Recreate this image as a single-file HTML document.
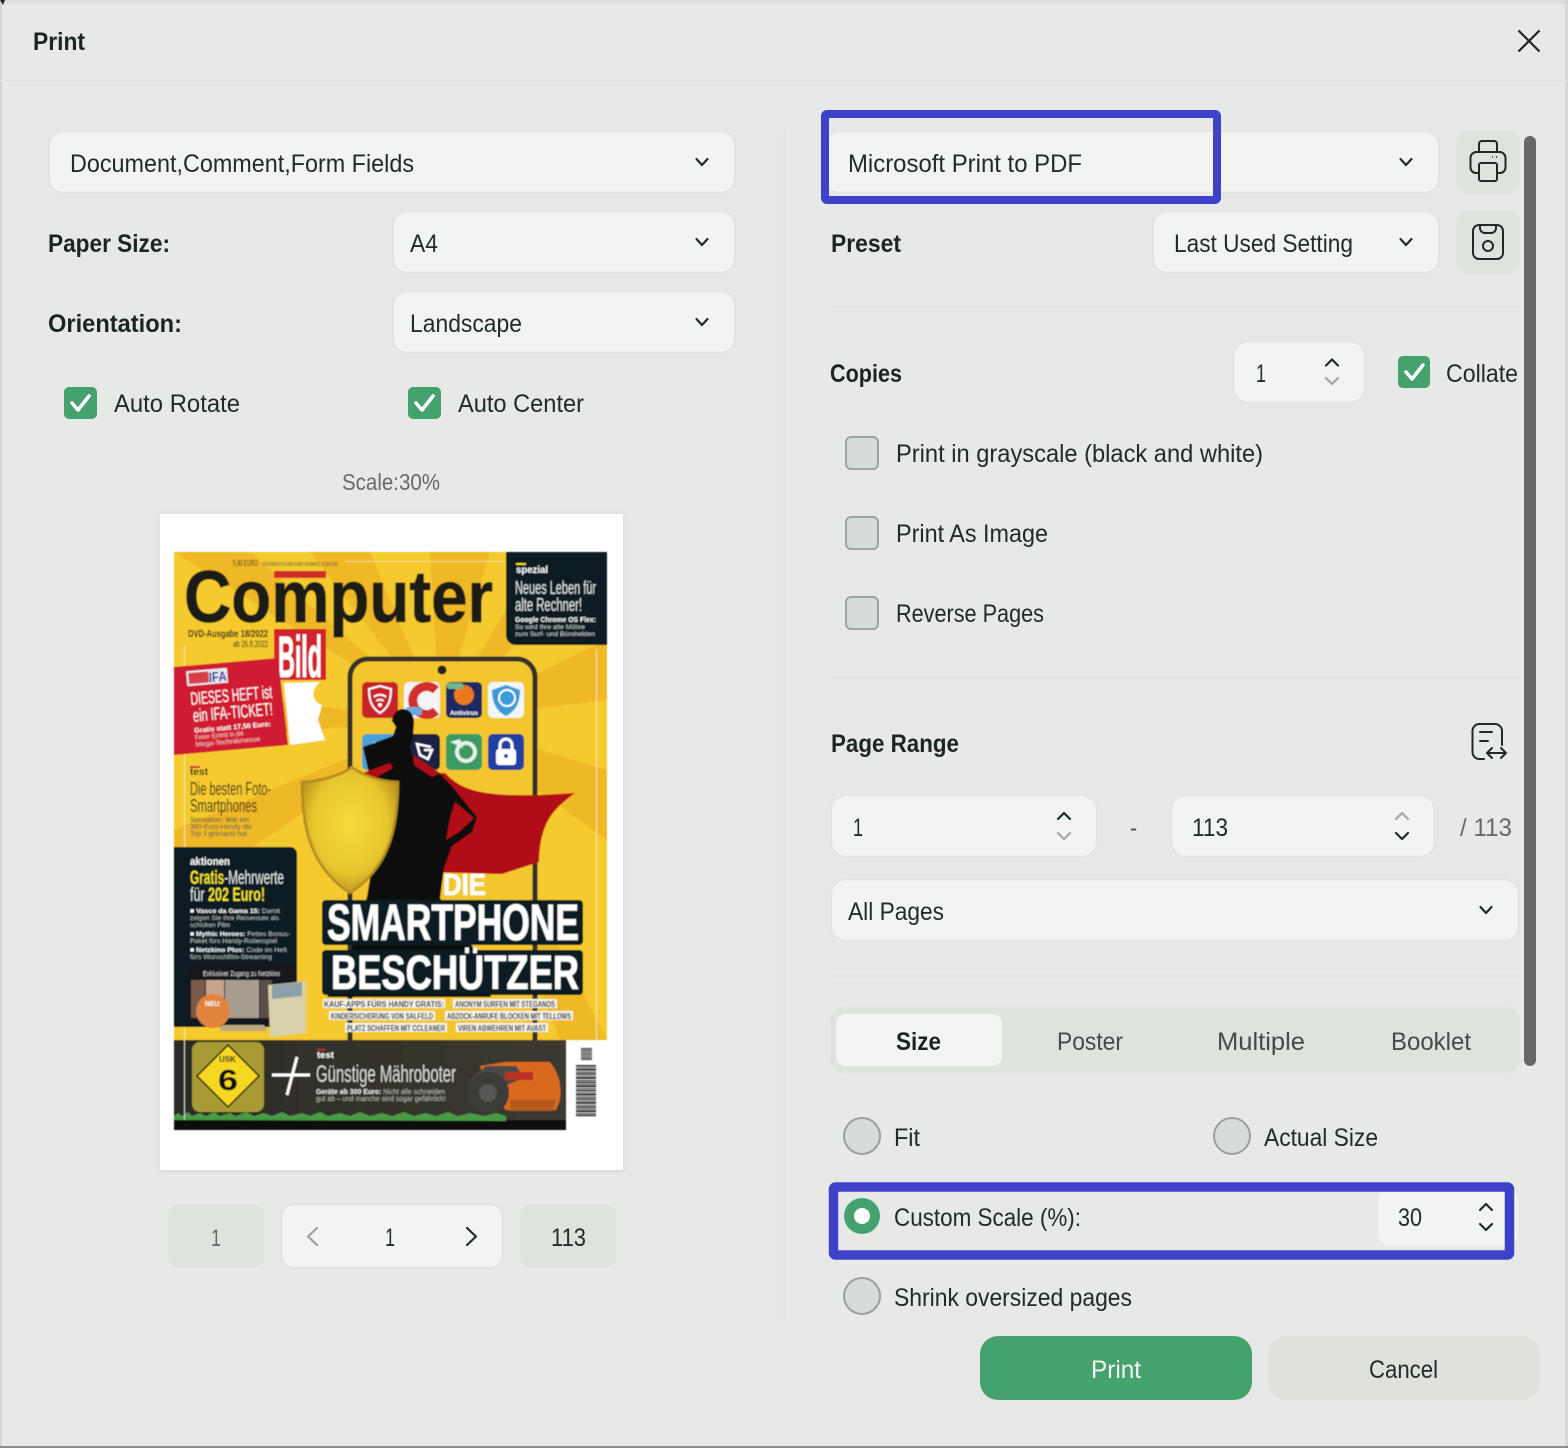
<!DOCTYPE html>
<html><head><meta charset="utf-8"><title>Print</title>
<style>
html,body{margin:0;padding:0;background:#e6e9e6}
svg{display:block}
text{font-family:"Liberation Sans",sans-serif}
.t{font-size:25px;fill:#222b28}
.b{font-size:25px;font-weight:bold;fill:#1d2523}
.card{fill:#f2f4f2;stroke:#e0e3e0;stroke-width:1.5}
.btn{fill:#dfe3de}
.ch{fill:none;stroke:#1f2a27;stroke-width:2.2;stroke-linecap:round;stroke-linejoin:round}
.gr{fill:none;stroke:#a4a9a6;stroke-width:2.2;stroke-linecap:round;stroke-linejoin:round}
.ic{fill:none;stroke:#1f2a27;stroke-width:2;stroke-linejoin:round;stroke-linecap:round}
.box{fill:#d6dcd7;stroke:#9fa5a1;stroke-width:2}
.rad{fill:#d6dcd7;stroke:#9a9f9b;stroke-width:2}
.w{fill:#fff}
.bd{font-weight:bold}
</style></head><body>
<svg xmlns="http://www.w3.org/2000/svg" width="1568" height="1448" viewBox="0 0 1568 1448">
<defs>
<clipPath id="yc"><rect x="174" y="552" width="433" height="488"/></clipPath>
<radialGradient id="sh" cx=".5" cy=".45" r=".6"><stop offset="0" stop-color="#f5dc3a"/><stop offset=".65" stop-color="#e8c52e"/><stop offset="1" stop-color="#b58c1c"/></radialGradient>
<linearGradient id="band" x1="0" y1="0" x2="1" y2="0"><stop offset="0" stop-color="#2b2b26"/><stop offset="1" stop-color="#3c3a31"/></linearGradient>
<filter id="soft" x="-5%" y="-5%" width="110%" height="110%"><feGaussianBlur stdDeviation="0.5"/></filter>
<filter id="ps" x="-5%" y="-5%" width="110%" height="110%"><feGaussianBlur stdDeviation="2"/></filter>
</defs>
<!-- window -->
<rect width="1568" height="1448" fill="#e6e9e6"/>
<rect width="1568" height="3.500" fill="#dcdedc"/>
<rect width="2" height="1448" fill="#d2d5d2"/>
<rect x="1565" width="3" height="1448" fill="#d5d7d5"/>
<rect y="1446" width="1568" height="2" fill="#8c8e8c"/>
<path d="M0 0h5l-2 5z" fill="#222"/>
<rect y="80" width="1568" height="1.500" fill="#e0e3e0"/>
<rect x="783" y="130" width="1.500" height="1190" fill="#e1e4e1"/>
<rect x="830" y="306" width="690" height="1.500" fill="#e0e3e0"/>
<rect x="830" y="676" width="690" height="1.500" fill="#e0e3e0"/>
<rect x="830" y="975" width="690" height="1.500" fill="#e0e3e0"/>

<text class="b" x="33" y="50" textLength="52" lengthAdjust="spacingAndGlyphs">Print</text>
<path d="M1518.500 30.500L1539.500 51.500M1539.500 30.500L1518.500 51.500" fill="none" stroke="#222" stroke-width="2.200"/>

<!-- left controls -->
<rect class="card" x="49" y="131.500" width="686" height="61" rx="14"/>
<text class="t" x="70" y="172" textLength="344" lengthAdjust="spacingAndGlyphs">Document,Comment,Form Fields</text>
<path class="ch" d="M696.500 159l5.500 6 5.500-6"/>
<text class="b" x="48" y="252" textLength="122" lengthAdjust="spacingAndGlyphs">Paper Size:</text>
<rect class="card" x="393" y="211.500" width="342" height="61" rx="14"/>
<text class="t" x="410" y="252" textLength="28" lengthAdjust="spacingAndGlyphs">A4</text>
<path class="ch" d="M696.500 239l5.500 6 5.500-6"/>
<text class="b" x="48" y="332" textLength="134" lengthAdjust="spacingAndGlyphs">Orientation:</text>
<rect class="card" x="393" y="291.500" width="342" height="61" rx="14"/>
<text class="t" x="410" y="332" textLength="112" lengthAdjust="spacingAndGlyphs">Landscape</text>
<path class="ch" d="M696.500 319l5.500 6 5.500-6"/>

<rect x="64" y="387" width="33" height="32" rx="5" fill="#45a26e"/>
<path d="M72 403l6 7 11-14" fill="none" stroke="#fff" stroke-width="3.500" stroke-linecap="round" stroke-linejoin="round"/>
<text class="t" x="114" y="412" textLength="126" lengthAdjust="spacingAndGlyphs">Auto Rotate</text>
<rect x="408" y="387" width="33" height="32" rx="5" fill="#45a26e"/>
<path d="M416 403l6 7 11-14" fill="none" stroke="#fff" stroke-width="3.500" stroke-linecap="round" stroke-linejoin="round"/>
<text class="t" x="458" y="412" textLength="126" lengthAdjust="spacingAndGlyphs">Auto Center</text>
<text x="342" y="490" font-size="23" fill="#666b69" textLength="98" lengthAdjust="spacingAndGlyphs">Scale:30%</text>

<!-- paper -->
<rect x="159" y="514" width="465" height="658" fill="#cfd2cf" filter="url(#ps)" opacity=".6"/>
<rect x="160" y="514" width="463" height="656" fill="#fff"/>

<g filter="url(#soft)">
<rect x="174" y="552" width="433" height="488" fill="#f5ca2e"/>
<g clip-path="url(#yc)" fill="#eaa722" opacity=".5">
<path d="M440 720L174 552H250z"/><path d="M440 720L310 552H370z"/><path d="M440 720L430 552H490z"/>
<path d="M440 720L540 552H607z"/><path d="M440 720L607 640V700z"/><path d="M440 720L607 770V840z"/>
<path d="M440 720L174 690V740z"/><path d="M440 720L174 830V900z"/><path d="M440 720L560 1040H607z"/>
</g>
<!-- spezial -->
<path d="M506 552H607V645H516a10 10 0 0 1-10-10z" fill="#0a1a20"/>
<rect x="516" y="563" width="10" height="2" fill="#f2d52a"/>
<text class="w bd" x="516" y="573" font-size="10" textLength="32" lengthAdjust="spacingAndGlyphs">spezial</text>
<text x="515" y="594" font-size="18" fill="#dfe6e6" textLength="81" lengthAdjust="spacingAndGlyphs">Neues Leben für</text>
<text x="515" y="611" font-size="18" fill="#dfe6e6" textLength="67" lengthAdjust="spacingAndGlyphs">alte Rechner!</text>
<text class="w bd" x="515" y="622" font-size="7" textLength="81" lengthAdjust="spacingAndGlyphs">Google Chrome OS Flex:</text>
<text x="515" y="629" font-size="6.500" fill="#c8d0d0" textLength="70" lengthAdjust="spacingAndGlyphs">So wird Ihre alte Möhre</text>
<text x="515" y="636" font-size="6.500" fill="#c8d0d0" textLength="80" lengthAdjust="spacingAndGlyphs">zum Surf- und Bürohelden</text>
<!-- masthead -->
<text x="233" y="566" font-size="8" fill="#222" textLength="25" lengthAdjust="spacingAndGlyphs">5,90 EURO</text>
<text x="262" y="566" font-size="5" fill="#444" textLength="76" lengthAdjust="spacingAndGlyphs">ÖSTERREICH 6,80 EURO SCHWEIZ 10,50 CHF</text>
<rect x="345" y="561" width="160" height="1" fill="#f6de84"/>
<rect x="274" y="571" width="52" height="7" fill="#d32a2a"/>
<text x="184" y="622" font-size="73" font-weight="bold" fill="#1c1b18" stroke="#1c1b18" stroke-width=".8" textLength="309" lengthAdjust="spacingAndGlyphs">Computer</text>
<text x="188" y="637" font-size="10" font-weight="bold" fill="#1c1b18" textLength="80" lengthAdjust="spacingAndGlyphs">DVD-Ausgabe 18/2022</text>
<text x="233" y="647" font-size="9" fill="#1c1b18" textLength="35" lengthAdjust="spacingAndGlyphs">ab 26.8.2022</text>
<rect x="274" y="629" width="52" height="51" fill="#d2202c"/>
<text class="w bd" x="278" y="677" font-size="58" stroke="#fff" stroke-width=".8" textLength="44" lengthAdjust="spacingAndGlyphs">Bild</text>
<rect x="184" y="645" width="1" height="480" fill="#f6e6a0"/>
<rect x="596" y="650" width="1" height="390" fill="#f6e6a0"/>
<!-- phone -->
<rect x="350" y="659" width="185" height="400" rx="18" fill="#f4c62e" stroke="#33302a" stroke-width="5"/>
<circle cx="442" cy="670" r="4.500" fill="#222"/>
<rect x="362" y="682" width="36" height="36" rx="5" fill="#c8202a"/>
<path d="M369 689l11-3 11 3c0 12-3 19-11 24-8-5-11-12-11-24z" fill="none" stroke="#fff" stroke-width="2"/>
<path d="M374 697a9 9 0 0 1 12 0M376.500 701a5 5 0 0 1 7 0" fill="none" stroke="#fff" stroke-width="2"/><circle cx="380" cy="705" r="2" fill="#fff"/>
<rect x="404" y="682" width="36" height="36" rx="5" fill="#f4f4f4"/>
<path d="M436 690a14 14 0 1 0 0 21" fill="none" stroke="#d22f2f" stroke-width="9"/>
<rect x="406" y="707" width="16" height="8" rx="2" fill="#6aa8dc"/>
<rect x="446" y="682" width="36" height="36" rx="5" fill="#1f2a62"/>
<circle cx="464" cy="695" r="10" fill="#e8791e"/>
<text class="w bd" x="450" y="715" font-size="6.500" textLength="28" lengthAdjust="spacingAndGlyphs">Antivirus</text>
<rect x="447" y="683" width="16" height="6" rx="2" fill="#6cb98c"/>
<rect x="488" y="682" width="36" height="36" rx="5" fill="#f2f6f8"/>
<path d="M506 685l14 5c0 12-4 21-14 26-10-5-14-14-14-26z" fill="#3a9bd8"/>
<circle cx="507" cy="698" r="8" fill="none" stroke="#fff" stroke-width="2"/>
<rect x="362" y="734" width="36" height="36" rx="5" fill="#4a9fd8"/>
<circle cx="375" cy="745" r="3" fill="#fff"/><path d="M369 750l6 4 6-3-3 12h-6z" fill="#fff"/>
<rect x="404" y="734" width="36" height="36" rx="5" fill="#1a2040"/>
<path d="M431 747l-14-3 3 11 8 4 4-9h-8" fill="none" stroke="#fff" stroke-width="2.500"/>
<rect x="446" y="734" width="36" height="36" rx="5" fill="#3a9a62"/>
<circle cx="466" cy="752" r="9" fill="none" stroke="#e8f0ea" stroke-width="4"/><path d="M450 742l10-3 3 9z" fill="#e8f0ea"/>
<rect x="488" y="734" width="36" height="36" rx="5" fill="#2040a0"/>
<rect x="496" y="749" width="20" height="16" rx="3" fill="#fff"/><path d="M500 749v-4a6 6 0 0 1 12 0v4" fill="none" stroke="#fff" stroke-width="3"/><circle cx="506" cy="756" r="2" fill="#2040a0"/>
<!-- cape -->
<path d="M428 773L445 773C462 790 480 800 575 793C555 808 540 820 539 862L502 874L430 872z" fill="#b00d14"/>
<!-- hero -->
<path d="M392 722a11 13 0 0 1 22 0l-1 15-3 9 1 8 28 19 12 12 26 32-5 15-20 14-8 22-4 30 40 60 11 39H327l22-40 18-60 10-60-8-64-6-26 30-11 3-9-5-8z" fill="#0d0c0a"/>
<path d="M363 773l27-10 3 5-18 10zM413 755l27 18-8 4-18-12z" fill="#b00d14"/>
<path d="M455 802l19 16-15 14-13 8 4-22z" fill="#b00d14"/>
<!-- shield -->
<path d="M352 767c-10 8-30 14-50 15 0 40 6 84 48 111 42-27 48-71 48-111-20-1-36-7-46-15z" fill="url(#sh)" stroke="#b28a20" stroke-width="2.500"/>
<!-- die + titles -->
<text class="w bd" x="443" y="895" font-size="31" stroke="#fff" stroke-width=".6" textLength="43" lengthAdjust="spacingAndGlyphs">DIE</text>
<rect x="322" y="900" width="261" height="45" rx="4" fill="#0a1a20"/>
<rect x="322" y="950" width="261" height="45" rx="4" fill="#0a1a20"/>
<text class="w bd" x="327" y="940" font-size="51" stroke="#fff" stroke-width=".6" textLength="252" lengthAdjust="spacingAndGlyphs">SMARTPHONE</text>
<text class="w bd" x="331" y="989" font-size="48" stroke="#fff" stroke-width=".6" textLength="248" lengthAdjust="spacingAndGlyphs">BESCHÜTZER</text>
<g fill="#f4f4ec">
<rect x="323" y="999" width="122" height="9"/><rect x="453" y="999" width="104" height="9"/>
<rect x="329" y="1011" width="106" height="9"/><rect x="445" y="1011" width="128" height="9"/>
<rect x="345" y="1023" width="102" height="9"/><rect x="456" y="1023" width="92" height="9"/>
</g>
<g font-size="8.500" font-weight="bold" fill="#1a1a18">
<text x="324" y="1007" textLength="120" lengthAdjust="spacingAndGlyphs">KAUF-APPS FÜRS HANDY GRATIS:</text>
<text x="455" y="1007" textLength="100" lengthAdjust="spacingAndGlyphs">ANONYM SURFEN MIT STEGANOS</text>
<text x="331" y="1019" textLength="102" lengthAdjust="spacingAndGlyphs">KINDERSICHERUNG VON SALFELD</text>
<text x="447" y="1019" textLength="124" lengthAdjust="spacingAndGlyphs">ABZOCK-ANRUFE BLOCKEN MIT TELLOWS</text>
<text x="347" y="1031" textLength="98" lengthAdjust="spacingAndGlyphs">PLATZ SCHAFFEN MIT CCLEANER</text>
<text x="458" y="1031" textLength="88" lengthAdjust="spacingAndGlyphs">VIREN ABWEHREN MIT AVAST</text>
</g>
<!-- IFA -->
<path d="M174 667L278 658L288 745L174 755z" fill="#d01f30"/>
<path d="M284 683L320 682C310 690 312 702 322 705L318 720L325 740L290 745z" fill="#fff"/>
<g transform="rotate(-5 191 705)">
<rect x="189" y="671" width="41" height="15" fill="#e8e8f0"/><rect x="191" y="673" width="20" height="11" fill="#d8404a"/>
<text x="211" y="684" font-size="14" font-weight="bold" fill="#2a3a8c" textLength="18" lengthAdjust="spacingAndGlyphs">IFA</text>
<text class="w" x="191" y="705" font-size="18" textLength="82" lengthAdjust="spacingAndGlyphs">DIESES HEFT ist</text>
<text class="w" x="192" y="722" font-size="18" textLength="80" lengthAdjust="spacingAndGlyphs">ein IFA-TICKET!</text>
<text class="w bd" x="192" y="733" font-size="7" textLength="77" lengthAdjust="spacingAndGlyphs">Gratis statt 17,50 Euro:</text>
<text x="192" y="740" font-size="7" fill="#f4c8c8" textLength="49" lengthAdjust="spacingAndGlyphs">Freier Eintritt in die</text>
<text x="192" y="747" font-size="7" fill="#f4c8c8" textLength="65" lengthAdjust="spacingAndGlyphs">Mega-Technikmesse</text>
</g>
<!-- test -->
<rect x="190" y="766" width="10" height="2" fill="#d0202a"/>
<text x="190" y="775" font-size="10" font-weight="bold" fill="#222" textLength="18" lengthAdjust="spacingAndGlyphs">test</text>
<text x="190" y="795" font-size="18" fill="#2a2a22" textLength="81" lengthAdjust="spacingAndGlyphs">Die besten Foto-</text>
<text x="190" y="812" font-size="18" fill="#2a2a22" textLength="67" lengthAdjust="spacingAndGlyphs">Smartphones</text>
<text x="190" y="822" font-size="7" fill="#444" textLength="59" lengthAdjust="spacingAndGlyphs">Sensation: Wie ein</text>
<text x="190" y="829" font-size="7" fill="#555" textLength="62" lengthAdjust="spacingAndGlyphs">380-Euro-Handy die</text>
<text x="190" y="836" font-size="7" fill="#555" textLength="57" lengthAdjust="spacingAndGlyphs">Top 3 geknackt hat</text>
<!-- aktionen -->
<path d="M174 847H290a7 7 0 0 1 7 7V1027H174z" fill="#0a1a20"/>
<text class="w bd" x="190" y="865" font-size="11" textLength="40" lengthAdjust="spacingAndGlyphs">aktionen</text>
<text x="190" y="884" font-size="19" fill="#dfe6e6" textLength="94" lengthAdjust="spacingAndGlyphs"><tspan fill="#efe030" font-weight="bold">Gratis</tspan>-Mehrwerte</text>
<text x="190" y="901" font-size="19" fill="#dfe6e6" textLength="75" lengthAdjust="spacingAndGlyphs">für <tspan fill="#efe030" font-weight="bold">202 Euro!</tspan></text>
<g font-size="6.800" fill="#b5bfc2">
<text x="190" y="913" textLength="90" lengthAdjust="spacingAndGlyphs"><tspan fill="#fff" font-weight="bold">■ Vasco da Gama 15:</tspan> Damit</text>
<text x="190" y="920" textLength="89" lengthAdjust="spacingAndGlyphs">zeigen Sie Ihre Reiseroute als</text>
<text x="190" y="927" textLength="40" lengthAdjust="spacingAndGlyphs">schicken Film</text>
<text x="190" y="936" textLength="100" lengthAdjust="spacingAndGlyphs"><tspan fill="#fff" font-weight="bold">■ Mythic Heroes:</tspan> Fettes Bonus-</text>
<text x="190" y="943" textLength="87" lengthAdjust="spacingAndGlyphs">Paket fürs Handy-Rollenspiel</text>
<text x="190" y="952" textLength="97" lengthAdjust="spacingAndGlyphs"><tspan fill="#fff" font-weight="bold">■ Netzkino Plus:</tspan> Code im Heft</text>
<text x="190" y="959" textLength="82" lengthAdjust="spacingAndGlyphs">fürs Wunschfilm-Streaming</text>
</g>
<rect x="189" y="965" width="108" height="58" fill="#16161a"/>
<text x="203" y="976" font-size="7" fill="#ddd" textLength="77" lengthAdjust="spacingAndGlyphs">Exklusiver Zugang zu Netzkino</text>
<rect x="191" y="980" width="14" height="38" fill="#7a5a48"/><rect x="206" y="980" width="18" height="38" fill="#c4a48a"/>
<rect x="225" y="980" width="34" height="38" fill="#a89c90"/><rect x="260" y="980" width="12" height="38" fill="#5a5048"/>
<circle cx="213" cy="1011" r="17" fill="#e0843c"/>
<text class="w bd" x="205" y="1006" font-size="7" textLength="16" lengthAdjust="spacingAndGlyphs">NEU:</text>
<path d="M222 1025h42l3 6h-47z" fill="#b8a880"/>
<path d="M268 985l38-4v52l-36 4z" fill="#d8d0a8"/>
<path d="M272 985l30-3v14l-30 3z" fill="#8ca0a8"/>
<!-- band -->
<rect x="174" y="1040" width="392" height="90" fill="url(#band)"/>
<rect x="174" y="1120" width="392" height="10" fill="#0c0c0a"/>
<path d="M174 1120l0-4 4-3 4 3 6-4 4 4 8-3 6 3 8-4 6 4 10-3 6 3 10-4 8 4 10-3 8 3 10-4 8 4 12-3 8 3 10-4 8 4 12-3 10 3 10-4 10 4 12-3 10 3 12-4 10 4 12-3 10 3 12-4 10 4 12-3 14 3 12-3 10 3v5z" fill="#4a9a44"/>
<rect x="184" y="1040" width="1" height="80" fill="#cfcfc4"/>
<rect x="192" y="1042" width="72" height="70" rx="8" fill="#a89a35"/>
<path d="M228 1045L259 1076L228 1107L197 1076z" fill="#f5d820" stroke="#111" stroke-width="1.500"/>
<text x="219" y="1062" font-size="8" font-weight="bold" fill="#222" textLength="17" lengthAdjust="spacingAndGlyphs">USK</text>
<text x="218" y="1090" font-size="29" font-weight="bold" fill="#111" textLength="20" lengthAdjust="spacingAndGlyphs">6</text>
<path d="M272 1075H310M297 1057L287 1095" fill="none" stroke="#fff" stroke-width="3"/>
<rect x="317" y="1049" width="8" height="1.500" fill="#d0202a"/>
<text class="w bd" x="317" y="1058" font-size="9" textLength="17" lengthAdjust="spacingAndGlyphs">test</text>
<text x="316" y="1082" font-size="24" fill="#d6d8d0" textLength="140" lengthAdjust="spacingAndGlyphs">Günstige Mähroboter</text>
<text x="316" y="1094" font-size="7" fill="#bcbcb0" textLength="129" lengthAdjust="spacingAndGlyphs"><tspan font-weight="bold" fill="#eee">Geräte ab 300 Euro:</tspan> Nicht alle schneiden</text>
<text x="316" y="1101" font-size="7" fill="#bcbcb0" textLength="130" lengthAdjust="spacingAndGlyphs">gut ab – und manche sind sogar gefährlich!</text>
<path d="M480 1066l25-4h45c8 10 12 22 10 38l-4 10h-50l-20-22z" fill="#d9691f"/>
<path d="M470 1080l16-14 30 0 8 12-20 8z" fill="#4a4a48"/>
<rect x="505" y="1072" width="28" height="8" fill="#b83020"/>
<circle cx="488" cy="1093" r="21" fill="#3a3a38"/><circle cx="488" cy="1093" r="9" fill="#555"/>
<path d="M510 1100h46l-4 11h-42z" fill="#b55a1c"/>
<!-- barcode -->
<path d="M586.500 1048v12" stroke="#444" stroke-width="11" stroke-dasharray="1.200 .6" fill="none"/>
<path d="M586 1065v52" stroke="#333" stroke-width="20" stroke-dasharray="1.500 .8 .8 .6 2 1 1 .6" fill="none"/>
</g>

<!-- pagination -->
<rect class="btn" x="168" y="1204" width="96" height="64" rx="12"/>
<text x="211" y="1246" font-size="24" fill="#667" textLength="10" lengthAdjust="spacingAndGlyphs">1</text>
<rect class="card" x="281.500" y="1204.500" width="221" height="63" rx="12"/>
<path d="M317 1228l-9 8.500 9 8.500" fill="none" stroke="#9aa09c" stroke-width="2.200" stroke-linecap="round" stroke-linejoin="round"/>
<text class="t" x="385" y="1246" textLength="10" lengthAdjust="spacingAndGlyphs">1</text>
<path d="M467 1228l9 8.500-9 8.500" fill="none" stroke="#222b28" stroke-width="2.200" stroke-linecap="round" stroke-linejoin="round"/>
<rect class="btn" x="520" y="1204" width="96" height="64" rx="12"/>
<text class="t" x="551" y="1246" textLength="35" lengthAdjust="spacingAndGlyphs" fill="#444">113</text>

<!-- right top -->
<rect class="card" x="825" y="131.500" width="614" height="61" rx="14"/>
<rect x="825" y="114" width="392" height="86" rx="2" fill="none" stroke="#3d42c8" stroke-width="8"/>
<text class="t" x="848" y="172" textLength="234" lengthAdjust="spacingAndGlyphs">Microsoft Print to PDF</text>
<path class="ch" d="M1400.500 159l5.500 6 5.500-6"/>
<rect class="btn" x="1456" y="130" width="64" height="64" rx="14"/>
<path class="ic" d="M1479 152v-8a3 3 0 0 1 3-3h12a3 3 0 0 1 3 3v8"/>
<path class="ic" d="M1479 173h-3a5.500 5.500 0 0 1-5.500-5.500V158a6 6 0 0 1 6-6h23a6 6 0 0 1 6 6v9.500a5.500 5.500 0 0 1-5.500 5.500h-3"/>
<rect class="ic" x="1479" y="163" width="18" height="18" rx="2"/>
<path d="M1492 157h1M1496 157h1" stroke="#1f2a27" stroke-width="1.500"/>
<text class="b" x="831" y="252" textLength="70" lengthAdjust="spacingAndGlyphs">Preset</text>
<rect class="card" x="1153" y="211.500" width="286" height="61" rx="14"/>
<text class="t" x="1174" y="252" textLength="179" lengthAdjust="spacingAndGlyphs">Last Used Setting</text>
<path class="ch" d="M1400.500 239l5.500 6 5.500-6"/>
<rect class="btn" x="1456" y="210" width="64" height="64" rx="14"/>
<rect class="ic" x="1473" y="225" width="30" height="34" rx="6"/>
<path class="ic" d="M1480 225v3a5 5 0 0 0 5 5h6a5 5 0 0 0 5-5v-3"/>
<circle class="ic" cx="1488" cy="246" r="5"/>

<!-- copies -->
<text class="b" x="830" y="382" textLength="72" lengthAdjust="spacingAndGlyphs">Copies</text>
<rect class="card" x="1233.500" y="341.500" width="131" height="61" rx="14"/>
<text class="t" x="1256" y="382" textLength="10" lengthAdjust="spacingAndGlyphs">1</text>
<path class="ch" d="M1326 365.500l6-6 6 6"/><path class="gr" d="M1326 378l6 6 6-6"/>
<rect x="1398" y="356" width="32" height="32" rx="5" fill="#45a26e"/>
<path d="M1406 372l6 7 11-14" fill="none" stroke="#fff" stroke-width="3.500" stroke-linecap="round" stroke-linejoin="round"/>
<text class="t" x="1446" y="382" textLength="72" lengthAdjust="spacingAndGlyphs">Collate</text>

<rect class="box" x="846" y="437" width="32" height="32" rx="5"/>
<text class="t" x="896" y="462" textLength="367" lengthAdjust="spacingAndGlyphs">Print in grayscale (black and white)</text>
<rect class="box" x="846" y="517" width="32" height="32" rx="5"/>
<text class="t" x="896" y="542" textLength="152" lengthAdjust="spacingAndGlyphs">Print As Image</text>
<rect class="box" x="846" y="597" width="32" height="32" rx="5"/>
<text class="t" x="896" y="622" textLength="148" lengthAdjust="spacingAndGlyphs">Reverse Pages</text>

<!-- page range -->
<text class="b" x="831" y="752" textLength="128" lengthAdjust="spacingAndGlyphs">Page Range</text>
<path class="ic" d="M1502 745v-14a7 7 0 0 0-7-7h-16a7 7 0 0 0-6.500 7v21a7 7 0 0 0 6.500 7h5"/>
<path class="ic" d="M1480 732h12M1480 741h8M1487 753h19M1492 748l-5 5 5 5M1501 748l5 5-5 5"/>
<rect class="card" x="831.500" y="795.500" width="265" height="61" rx="14"/>
<text class="t" x="853" y="836" textLength="10" lengthAdjust="spacingAndGlyphs">1</text>
<path class="ch" d="M1058 819l6-6 6 6"/><path class="gr" d="M1058 833l6 6 6-6"/>
<text x="1130" y="836" font-size="25" fill="#555" textLength="7" lengthAdjust="spacingAndGlyphs">-</text>
<rect class="card" x="1171.500" y="795.500" width="263" height="61" rx="14"/>
<text class="t" x="1192" y="836" textLength="36" lengthAdjust="spacingAndGlyphs">113</text>
<path class="gr" d="M1396 819l6-6 6 6"/><path class="ch" d="M1396 833l6 6 6-6"/>
<text x="1460" y="836" font-size="25" fill="#666b69" textLength="52" lengthAdjust="spacingAndGlyphs">/ 113</text>
<rect class="card" x="831.500" y="879.500" width="687" height="61" rx="14"/>
<text class="t" x="848" y="920" textLength="96" lengthAdjust="spacingAndGlyphs">All Pages</text>
<path class="ch" d="M1480.500 907l5.500 6 5.500-6"/>

<!-- tabs -->
<rect class="btn" x="830" y="1007" width="690" height="66" rx="14"/>
<rect x="836" y="1014" width="166" height="52" rx="10" fill="#f3f5f3"/>
<text class="b" x="896" y="1050" textLength="45" lengthAdjust="spacingAndGlyphs">Size</text>
<text x="1057" y="1050" font-size="25" fill="#444b48" textLength="66" lengthAdjust="spacingAndGlyphs">Poster</text>
<text x="1217" y="1050" font-size="25" fill="#444b48" textLength="88" lengthAdjust="spacingAndGlyphs">Multiple</text>
<text x="1391" y="1050" font-size="25" fill="#444b48" textLength="80" lengthAdjust="spacingAndGlyphs">Booklet</text>

<!-- radios -->
<circle class="rad" cx="862" cy="1136" r="18"/>
<text class="t" x="894" y="1146" textLength="26" lengthAdjust="spacingAndGlyphs">Fit</text>
<circle class="rad" cx="1232" cy="1136" r="18"/>
<text class="t" x="1264" y="1146" textLength="114" lengthAdjust="spacingAndGlyphs">Actual Size</text>
<rect x="1378" y="1188" width="140" height="58" rx="12" fill="#f2f4f2"/>
<rect x="833.500" y="1187" width="676" height="68" rx="2" fill="none" stroke="#3d42c8" stroke-width="9.500"/>
<circle cx="862" cy="1216" r="18" fill="#45a26e"/><circle cx="862" cy="1216" r="8" fill="#fff"/>
<text class="t" x="894" y="1226" textLength="187" lengthAdjust="spacingAndGlyphs">Custom Scale (%):</text>
<text class="t" x="1398" y="1226" textLength="24" lengthAdjust="spacingAndGlyphs">30</text>
<path class="ch" d="M1480 1210l6-6 6 6"/><path class="ch" d="M1480 1224l6 6 6-6"/>
<circle class="rad" cx="862" cy="1296" r="18"/>
<text class="t" x="894" y="1306" textLength="238" lengthAdjust="spacingAndGlyphs">Shrink oversized pages</text>

<!-- scrollbar -->
<rect x="1524" y="136" width="12" height="930" rx="6" fill="#666866"/>

<!-- buttons -->
<rect x="980" y="1336" width="272" height="64" rx="18" fill="#45a26e"/>
<text x="1091" y="1378" font-size="25" fill="#f0f7f2" textLength="50" lengthAdjust="spacingAndGlyphs">Print</text>
<rect x="1268" y="1336" width="272" height="64" rx="18" fill="#dfe2dc"/>
<text class="t" x="1369" y="1378" textLength="69" lengthAdjust="spacingAndGlyphs">Cancel</text>
</svg>
</body></html>
